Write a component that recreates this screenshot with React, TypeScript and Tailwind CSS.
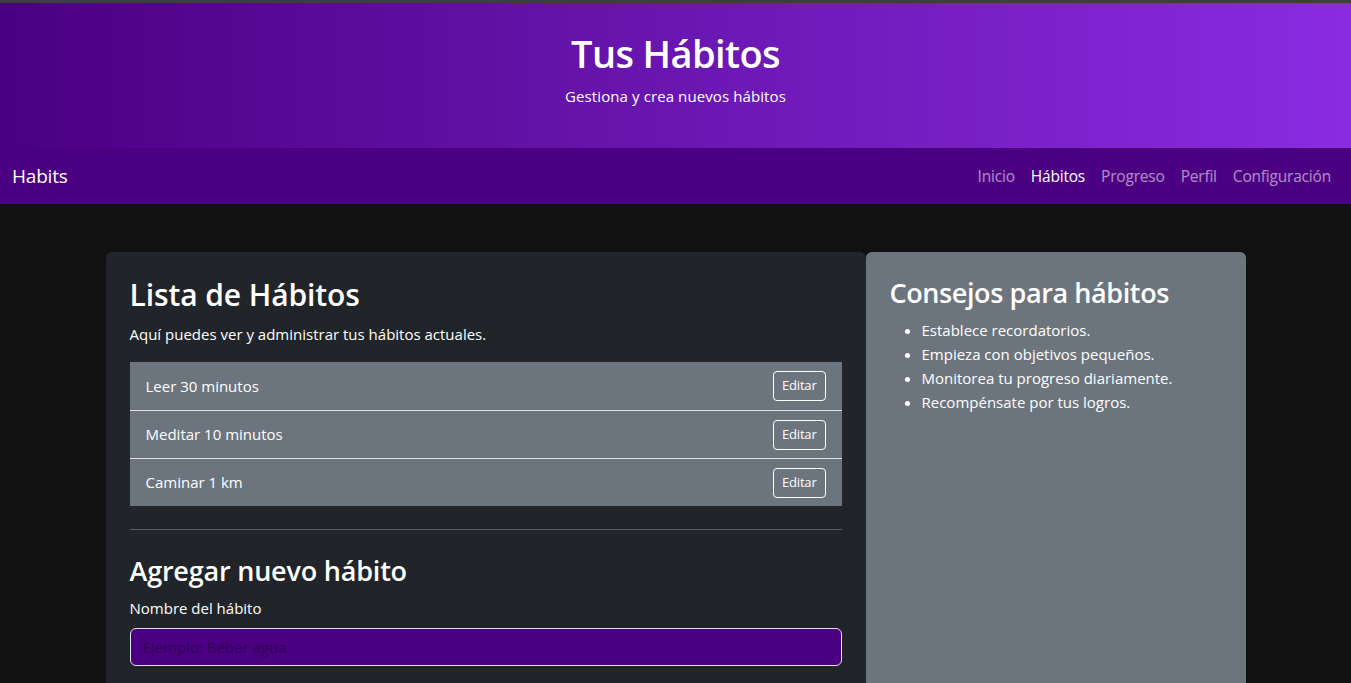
import React from "react";

const font = { fontFamily: '"Open Sans", "Noto Sans", sans-serif' };

export default function App() {
  const habits = ["Leer 30 minutos", "Meditar 10 minutos", "Caminar 1 km"];
  const tips = [
    "Establece recordatorios.",
    "Empieza con objetivos pequeños.",
    "Monitorea tu progreso diariamente.",
    "Recompénsate por tus logros.",
  ];
  return (
    <div className="min-h-[683px] bg-[#111111] text-white" style={font}>
      <div className="h-[3px] bg-[#3b403b]" />
      <header className="h-[145px] bg-gradient-to-r from-[#4b0082] to-[#8a2be2] pt-[27px] text-center">
        <h1 className="text-[38px] leading-[46px] font-semibold tracking-[-0.6px]">Tus Hábitos</h1>
        <p className="mt-[8px] text-[15px] leading-[24px] tracking-[0.1px]">Gestiona y crea nuevos hábitos</p>
      </header>
      <nav className="h-[56px] bg-[#4b0082] flex items-center justify-between px-3">
        <span className="text-[19px] tracking-[-0.2px]">Habits</span>
        <ul className="flex text-[15.5px] tracking-[-0.2px] pt-[2px]">
          {["Inicio", "Hábitos", "Progreso", "Perfil", "Configuración"].map((n) => (
            <li key={n} className={"px-2 " + (n === "Hábitos" ? "text-white" : "text-white/55")}>
              {n}
            </li>
          ))}
        </ul>
      </nav>
      <main className="w-[1140px] mx-auto mt-12 flex">
        <section className="w-[760px] bg-[#212529] rounded-md p-6 pb-4">
          <h2 className="text-[30px] leading-[38px] font-semibold tracking-[-0.1px] mb-2">Lista de Hábitos</h2>
          <p className="text-[15px] leading-[24px] mb-4">Aquí puedes ver y administrar tus hábitos actuales.</p>
          <ul>
            {habits.map((h, i) => (
              <li
                key={h}
                className={
                  "h-[48px] bg-[#6c757d] flex items-center justify-between pl-4 pr-4 text-[15px] " +
                  (i > 0 ? "border-t border-[#dee2e6]" : "")
                }
              >
                <span>{h}</span>
                <button className="h-[30px] px-2 border border-white rounded text-[13px] tracking-[-0.2px] text-white">
                  Editar
                </button>
              </li>
            ))}
          </ul>
          <hr className="mt-[23px] mb-6 border-0 border-t border-white/25" />
          <h3 className="text-[27px] leading-[34px] font-semibold tracking-[-0.2px] mb-2">Agregar nuevo hábito</h3>
          <label className="block text-[15px] leading-[24px] mb-2">Nombre del hábito</label>
          <input
            className="w-full h-[38px] bg-[#4b0082] border border-[#dee2e6] rounded-md px-3 text-[15px] placeholder:text-[#2e0057] outline-none"
            placeholder="Ejemplo: Beber agua"
            style={font}
          />
          <div className="h-[40px]" />
        </section>
        <aside className="w-[380px] bg-[#6c757d] rounded-md p-6">
          <h3 className="text-[27px] leading-[34px] font-semibold tracking-[-0.4px] mb-2">Consejos para hábitos</h3>
          <ul className="list-disc pl-8 text-[15px] leading-[24px]">
            {tips.map((t) => (
              <li key={t}>{t}</li>
            ))}
          </ul>
        </aside>
      </main>
    </div>
  );
}
